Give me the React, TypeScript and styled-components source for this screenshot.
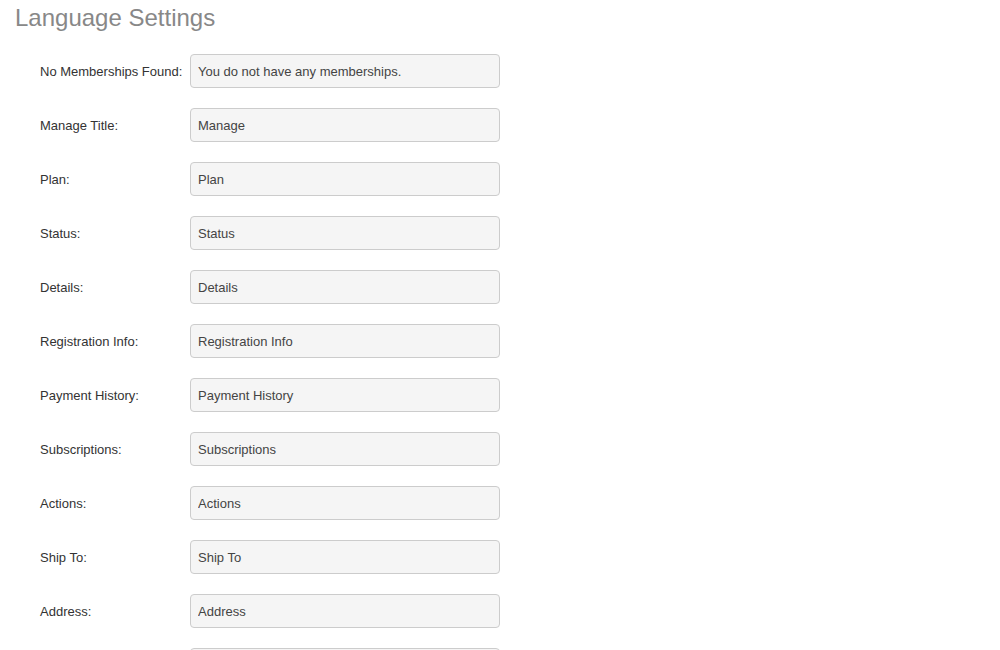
import * as React from 'react';
import styled, {createGlobalStyle} from "styled-components";

const GlobalStyle = createGlobalStyle`
    html, body {
        margin: 0;
        padding: 0;
        background: #ffffff;
        font-family: "Liberation Sans", Arial, sans-serif;
        overflow: hidden;
    }
`;

const fields: [string, string][] = [
    ["No Memberships Found:", "You do not have any memberships."],
    ["Manage Title:", "Manage"],
    ["Plan:", "Plan"],
    ["Status:", "Status"],
    ["Details:", "Details"],
    ["Registration Info:", "Registration Info"],
    ["Payment History:", "Payment History"],
    ["Subscriptions:", "Subscriptions"],
    ["Actions:", "Actions"],
    ["Ship To:", "Ship To"],
    ["Address:", "Address"],
    ["", ""],
];

const App: React.FC = () => {
    return (
        <Page>
            <GlobalStyle/>
            <Title>Language Settings</Title>
            <Form>
                {fields.map(([label, value], i) => (
                    <Row key={i}>
                        <Label>{label}</Label>
                        <Input defaultValue={value}/>
                    </Row>
                ))}
            </Form>
        </Page>
    );
}

export default App;

const Page = styled.div`
    height: 650px;
    padding: 5px 15px 0;
    box-sizing: border-box;
    overflow: hidden;
`;

const Title = styled.h2`
    margin: 0;
    font-size: 24px;
    line-height: 26px;
    font-weight: normal;
    color: #888888;
`;

const Form = styled.div`
    display: flex;
    flex-direction: column;
    gap: 20px;
    margin-top: 23px;
    padding-left: 25px;
`;

const Row = styled.div`
    display: flex;
    align-items: center;
    height: 34px;
`;

const Label = styled.label`
    width: 150px;
    font-size: 13px;
    color: #333333;
    white-space: nowrap;
`;

const Input = styled.input`
    width: 310px;
    height: 34px;
    box-sizing: border-box;
    padding: 0 7px;
    border: 1px solid #cccccc;
    border-radius: 4px;
    background: #f5f5f5;
    font-family: "Liberation Sans", Arial, sans-serif;
    font-size: 13px;
    color: #444444;
    outline: none;
`;
